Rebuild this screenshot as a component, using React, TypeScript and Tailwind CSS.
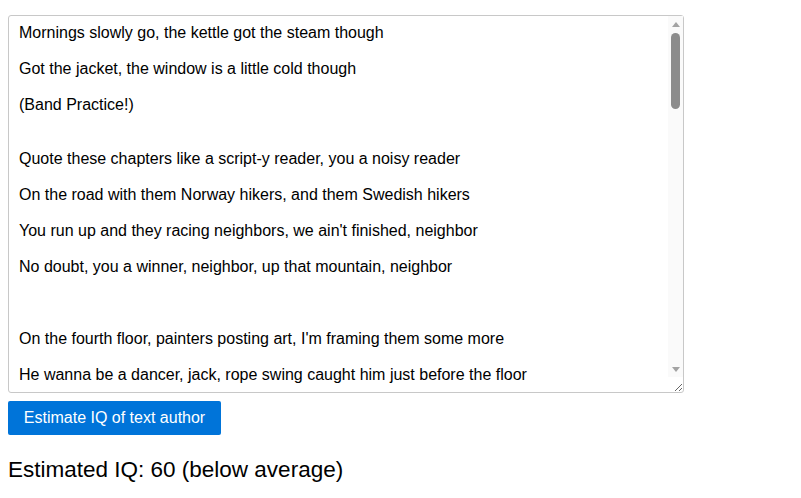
const sampleText = [
  'Mornings slowly go, the kettle got the steam though',
  '',
  'Got the jacket, the window is a little cold though',
  '',
  '(Band Practice!)',
  '',
  '',
  'Quote these chapters like a script-y reader, you a noisy reader',
  '',
  'On the road with them Norway hikers, and them Swedish hikers',
  '',
  "You run up and they racing neighbors, we ain't finished, neighbor",
  '',
  'No doubt, you a winner, neighbor, up that mountain, neighbor',
  '',
  '',
  '',
  "On the fourth floor, painters posting art, I'm framing them some more",
  '',
  'He wanna be a dancer, jack, rope swing caught him just before the floor',
  '',
  'Everybody singing now, the chorus rolling through the door',
].join('\n');

// ─── Component ───────────────────────────────────────────────────────
const App: React.FC = () => {
  return (
    <div className="px-2 pt-[15px] font-['Liberation_Sans',Arial,sans-serif] text-black bg-white min-h-[498px]">
      {/* Text Input */}
      <div className="relative w-[676px]">
        <textarea
          readOnly
          value={sampleText}
          className="block w-[676px] h-[378px] border border-[#c8c8c8] rounded-[3px] pl-[10px] pr-[24px] pt-[8px] text-[16px] leading-[18px] resize-y outline-none overflow-hidden bg-white"
        />

        {/* Scrollbar overlay */}
        <div className="absolute right-px top-px bottom-[16px] w-[15px] bg-[#fafafa] flex flex-col items-center pointer-events-none">
          <div className="h-[16px] flex items-center justify-center">
            <div className="w-0 h-0 border-x-[4px] border-x-transparent border-b-[5px] border-b-[#a3a3a3]" />
          </div>
          <div className="mt-[1px] w-[9px] h-[76px] rounded-full bg-[#8c8c8c]" />
          <div className="flex-1" />
          <div className="h-[16px] flex items-center justify-center">
            <div className="w-0 h-0 border-x-[4px] border-x-transparent border-t-[5px] border-t-[#a3a3a3]" />
          </div>
        </div>
      </div>

      {/* Action */}
      <button className="mt-2 h-[34px] w-[213px] bg-[#0074d9] text-white text-[16px] rounded-[2px]">
        Estimate IQ of text author
      </button>

      {/* Result */}
      <p className="mt-[22px] text-[22.5px] leading-[26px]">Estimated IQ: 60 (below average)</p>
    </div>
  );
};

export default App;
